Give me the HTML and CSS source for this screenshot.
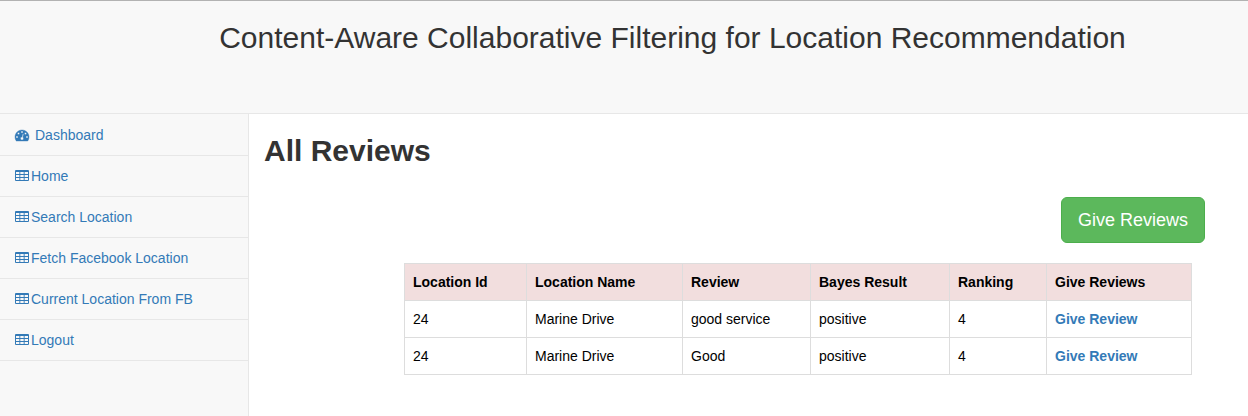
FILE: index.html
```html
<!DOCTYPE html>
<html lang="en">
<head>
<meta charset="utf-8">
<title>All Reviews</title>
<link rel="stylesheet" href="styles.css">
</head>
<body>
<svg class="defs" width="0" height="0">
  <symbol id="table" viewBox="0 0 14 11"><path fill-rule="evenodd" d="M1 0H13Q14 0 14 1V10Q14 11 13 11H1Q0 11 0 10V1Q0 0 1 0ZM1 2V4H4.4V2ZM5.3 2V4H8.7V2ZM9.6 2V4H13V2ZM1 5V7H4.4V5ZM5.3 5V7H8.7V5ZM9.6 5V7H13V5ZM1 8V10H4.4V8ZM5.3 8V10H8.7V8ZM9.6 8V10H13V8Z"/></symbol>
</svg>
<header class="header"><h1 class="title">Content-Aware Collaborative Filtering for Location Recommendation</h1></header>
<div class="layout">
  <nav class="sidebar">
    <a class="item" href="#"><svg class="gauge" viewBox="0 0 1792 1792"><path d="M384 1152q0-53-37.5-90.5t-90.5-37.5-90.5 37.5-37.5 90.5 37.5 90.5 90.5 37.5 90.5-37.5 37.5-90.5zm192-448q0-53-37.5-90.5t-90.5-37.5-90.5 37.5-37.5 90.5 37.5 90.5 90.5 37.5 90.5-37.5 37.5-90.5zm428 481l101-382q6-26-7.5-48.5t-38.5-29.5-48 6.5-30 39.5l-101 382q-60 5-107 43.5t-63 98.5q-20 77 20 146t117 89 146-20 89-117q16-60-6-117t-72-91zm660-33q0-53-37.5-90.5t-90.5-37.5-90.5 37.5-37.5 90.5 37.5 90.5 90.5 37.5 90.5-37.5 37.5-90.5zm-640-640q0-53-37.5-90.5t-90.5-37.5-90.5 37.5-37.5 90.5 37.5 90.5 90.5 37.5 90.5-37.5 37.5-90.5zm448 192q0-53-37.5-90.5t-90.5-37.5-90.5 37.5-37.5 90.5 37.5 90.5 90.5 37.5 90.5-37.5 37.5-90.5zm320 448q0 261-141 483-19 29-54 29h-1402q-35 0-54-29-141-221-141-483 0-182 71-348t191-286 286-191 348-71 348 71 286 191 191 286 71 348z"/></svg><span>Dashboard</span></a>
    <a class="item" href="#"><svg class="grid"><use href="#table"/></svg><span>Home</span></a>
    <a class="item" href="#"><svg class="grid"><use href="#table"/></svg><span>Search Location</span></a>
    <a class="item" href="#"><svg class="grid"><use href="#table"/></svg><span>Fetch Facebook Location</span></a>
    <a class="item" href="#"><svg class="grid"><use href="#table"/></svg><span>Current Location From FB</span></a>
    <a class="item" href="#"><svg class="grid"><use href="#table"/></svg><span>Logout</span></a>
  </nav>
  <main class="content">
    <h2 class="heading">All Reviews</h2>
    <div class="actions"><a class="button" href="#">Give Reviews</a></div>
    <table class="reviews">
      <colgroup><col class="c-id"><col class="c-name"><col class="c-review"><col class="c-bayes"><col class="c-rank"><col class="c-give"></colgroup>
      <thead><tr><th>Location Id</th><th>Location Name</th><th>Review</th><th>Bayes Result</th><th>Ranking</th><th>Give Reviews</th></tr></thead>
      <tbody>
        <tr><td>24</td><td>Marine Drive</td><td>good service</td><td>positive</td><td>4</td><td><a class="link" href="#">Give Review</a></td></tr>
        <tr><td>24</td><td>Marine Drive</td><td>Good</td><td>positive</td><td>4</td><td><a class="link" href="#">Give Review</a></td></tr>
      </tbody>
    </table>
  </main>
</div>
</body>
</html>
```
FILE: styles.css
```css
* { box-sizing: border-box; }
body { margin: 0; height: 416px; display: flex; flex-direction: column; overflow: hidden; background: #f8f8f8; color: #333; font: 14px/20px "Liberation Sans", Arial, sans-serif; }
a { color: #337ab7; text-decoration: none; }
.defs { display: none; }
.header { height: 114px; flex: none; padding: 20px 0 0 97px; border-top: 1px solid #b2b2b2; border-bottom: 1px solid #e7e7e7; text-align: center; }
.title { margin: 0; font-size: 30px; line-height: 33px; font-weight: 400; }
.layout { flex: 1; display: flex; }
.sidebar { width: 248px; flex: none; padding-top: 1px; }
.item { display: flex; align-items: center; height: 41px; padding-left: 15px; border-bottom: 1px solid #e7e7e7; fill: #337ab7; }
.gauge { width: 14px; height: 14px; margin-right: 6px; stroke: #337ab7; stroke-width: 50px; overflow: visible; }
.grid { width: 14px; height: 11px; margin: 0 2px 1px 0; }
.content { flex: 1; padding: 20px 43px 0 15px; border-left: 1px solid #e7e7e7; background: #fff; }
.heading { margin: 0 0 30px; font-size: 30px; line-height: 33px; font-weight: 700; }
.actions { display: flex; justify-content: flex-end; margin-bottom: 20px; }
.button { width: 144px; height: 46px; border: 1px solid #4cae4c; border-radius: 6px; background: #5cb85c; color: #fff; font-size: 18px; line-height: 44px; text-align: center; }
.reviews { width: 788px; margin-left: 140px; border-collapse: collapse; table-layout: fixed; color: #000; }
.reviews th, .reviews td { height: 37px; padding: 8px; border: 1px solid #ddd; text-align: left; }
.reviews th { background: #f2dede; }
.c-id { width: 122px; }
.c-name { width: 156px; }
.c-review { width: 128px; }
.c-bayes { width: 139px; }
.c-rank { width: 97px; }
.c-give { width: 145px; }
.link { font-weight: 700; }
```
